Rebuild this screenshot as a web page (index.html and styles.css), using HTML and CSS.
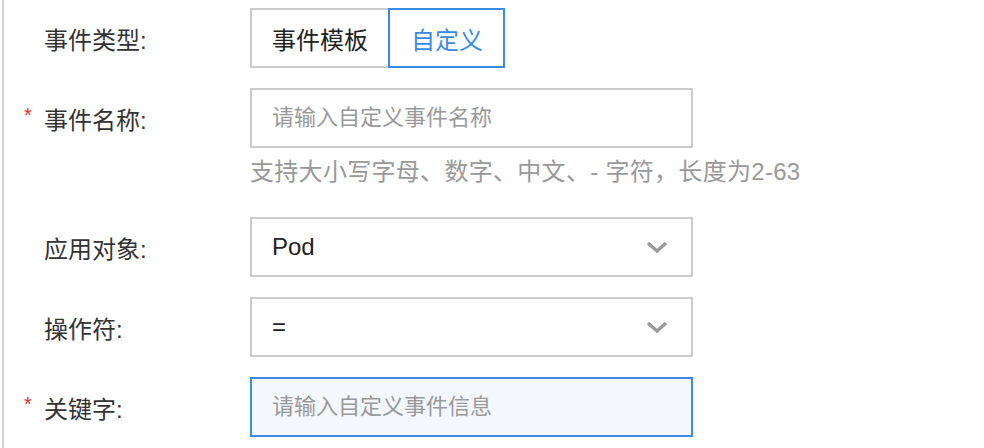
FILE: index.html
```html
<!DOCTYPE html>
<html lang="zh-CN">
<head>
    <meta charset="UTF-8">
    <meta name="viewport" content="width=device-width, initial-scale=1.0">
    <title>自定义事件</title>
    <link rel="stylesheet" href="styles.css">
</head>
<body>
    <div class="panel">
        <form class="event-form">
            <div class="form-row">
                <label class="form-label">事件类型:</label>
                <div class="segmented">
                    <button type="button" class="segment">事件模板</button>
                    <button type="button" class="segment active">自定义</button>
                </div>
            </div>

            <div class="form-row has-help">
                <label class="form-label" for="eventName"><span class="required">*</span>事件名称:</label>
                <div class="form-field">
                    <input type="text" id="eventName" class="text-input" placeholder="请输入自定义事件名称">
                    <p class="help">支持大小写字母、数字、中文、- 字符，长度为2-63</p>
                </div>
            </div>

            <div class="form-row">
                <label class="form-label">应用对象:</label>
                <div class="select-box">
                    <span class="select-value">Pod</span>
                    <svg class="chevron" width="22" height="14" viewBox="0 0 22 14"><path d="M2 3 L11 11 L20 3" fill="none" stroke="#999" stroke-width="3.2"/></svg>
                </div>
            </div>

            <div class="form-row">
                <label class="form-label">操作符:</label>
                <div class="select-box">
                    <span class="select-value">=</span>
                    <svg class="chevron" width="22" height="14" viewBox="0 0 22 14"><path d="M2 3 L11 11 L20 3" fill="none" stroke="#999" stroke-width="3.2"/></svg>
                </div>
            </div>

            <div class="form-row">
                <label class="form-label" for="keyword"><span class="required">*</span>关键字:</label>
                <input type="text" id="keyword" class="text-input focused" placeholder="请输入自定义事件信息">
            </div>
        </form>
    </div>
</body>
</html>
```

FILE: styles.css
```css
body {
    margin: 0;
    padding: 0;
    background-color: #ffffff;
    font-family: "Liberation Sans", "Noto Sans CJK SC", sans-serif;
    color: #333;
}
.panel {
    margin-left: 2px;
    border-left: 2px solid #d4d4d4;
    min-height: 448px;
    box-sizing: border-box;
    padding-top: 8px;
}
.event-form {
    display: flex;
    flex-direction: column;
    gap: 20px;
}
.form-row {
    display: flex;
    align-items: flex-start;
}
.form-label {
    width: 246px;
    height: 60px;
    box-sizing: border-box;
    padding-left: 40px;
    display: flex;
    align-items: center;
    font-size: 24px;
    color: #333;
}
.required {
    width: 20px;
    margin-left: -20px;
    color: #e0322f;
    font-size: 20px;
    position: relative;
    top: -3px;
}
.segmented {
    display: flex;
    height: 60px;
}
.segment {
    height: 60px;
    box-sizing: border-box;
    padding: 0 20px;
    border: 2px solid #cccccc;
    background-color: #ffffff;
    font-family: inherit;
    font-size: 24px;
    color: #222;
}
.segment.active {
    border-color: #3a8ae6;
    color: #3a8ae6;
    margin-left: -2px;
    padding: 0 20px 0 21px;
}
.form-field {
    display: flex;
    flex-direction: column;
}
.text-input {
    width: 443px;
    height: 60px;
    box-sizing: border-box;
    padding: 0 20px;
    border: 2px solid #cccccc;
    border-radius: 0;
    background-color: #ffffff;
    font-family: inherit;
    font-size: 22px;
    color: #333;
    outline: none;
}
.text-input::placeholder {
    color: #999;
}
.text-input.focused {
    border-color: #3a8ae6;
    background-color: #f4f7fb;
}
.help {
    margin: 0;
    padding: 9px 0 10px;
    line-height: 30px;
    font-size: 24px;
    letter-spacing: 0.3px;
    color: #999;
    white-space: nowrap;
}
.select-box {
    width: 443px;
    height: 60px;
    box-sizing: border-box;
    padding: 0 23px 0 20px;
    border: 2px solid #cccccc;
    display: flex;
    align-items: center;
    justify-content: space-between;
    font-size: 24px;
    color: #222;
}
```
